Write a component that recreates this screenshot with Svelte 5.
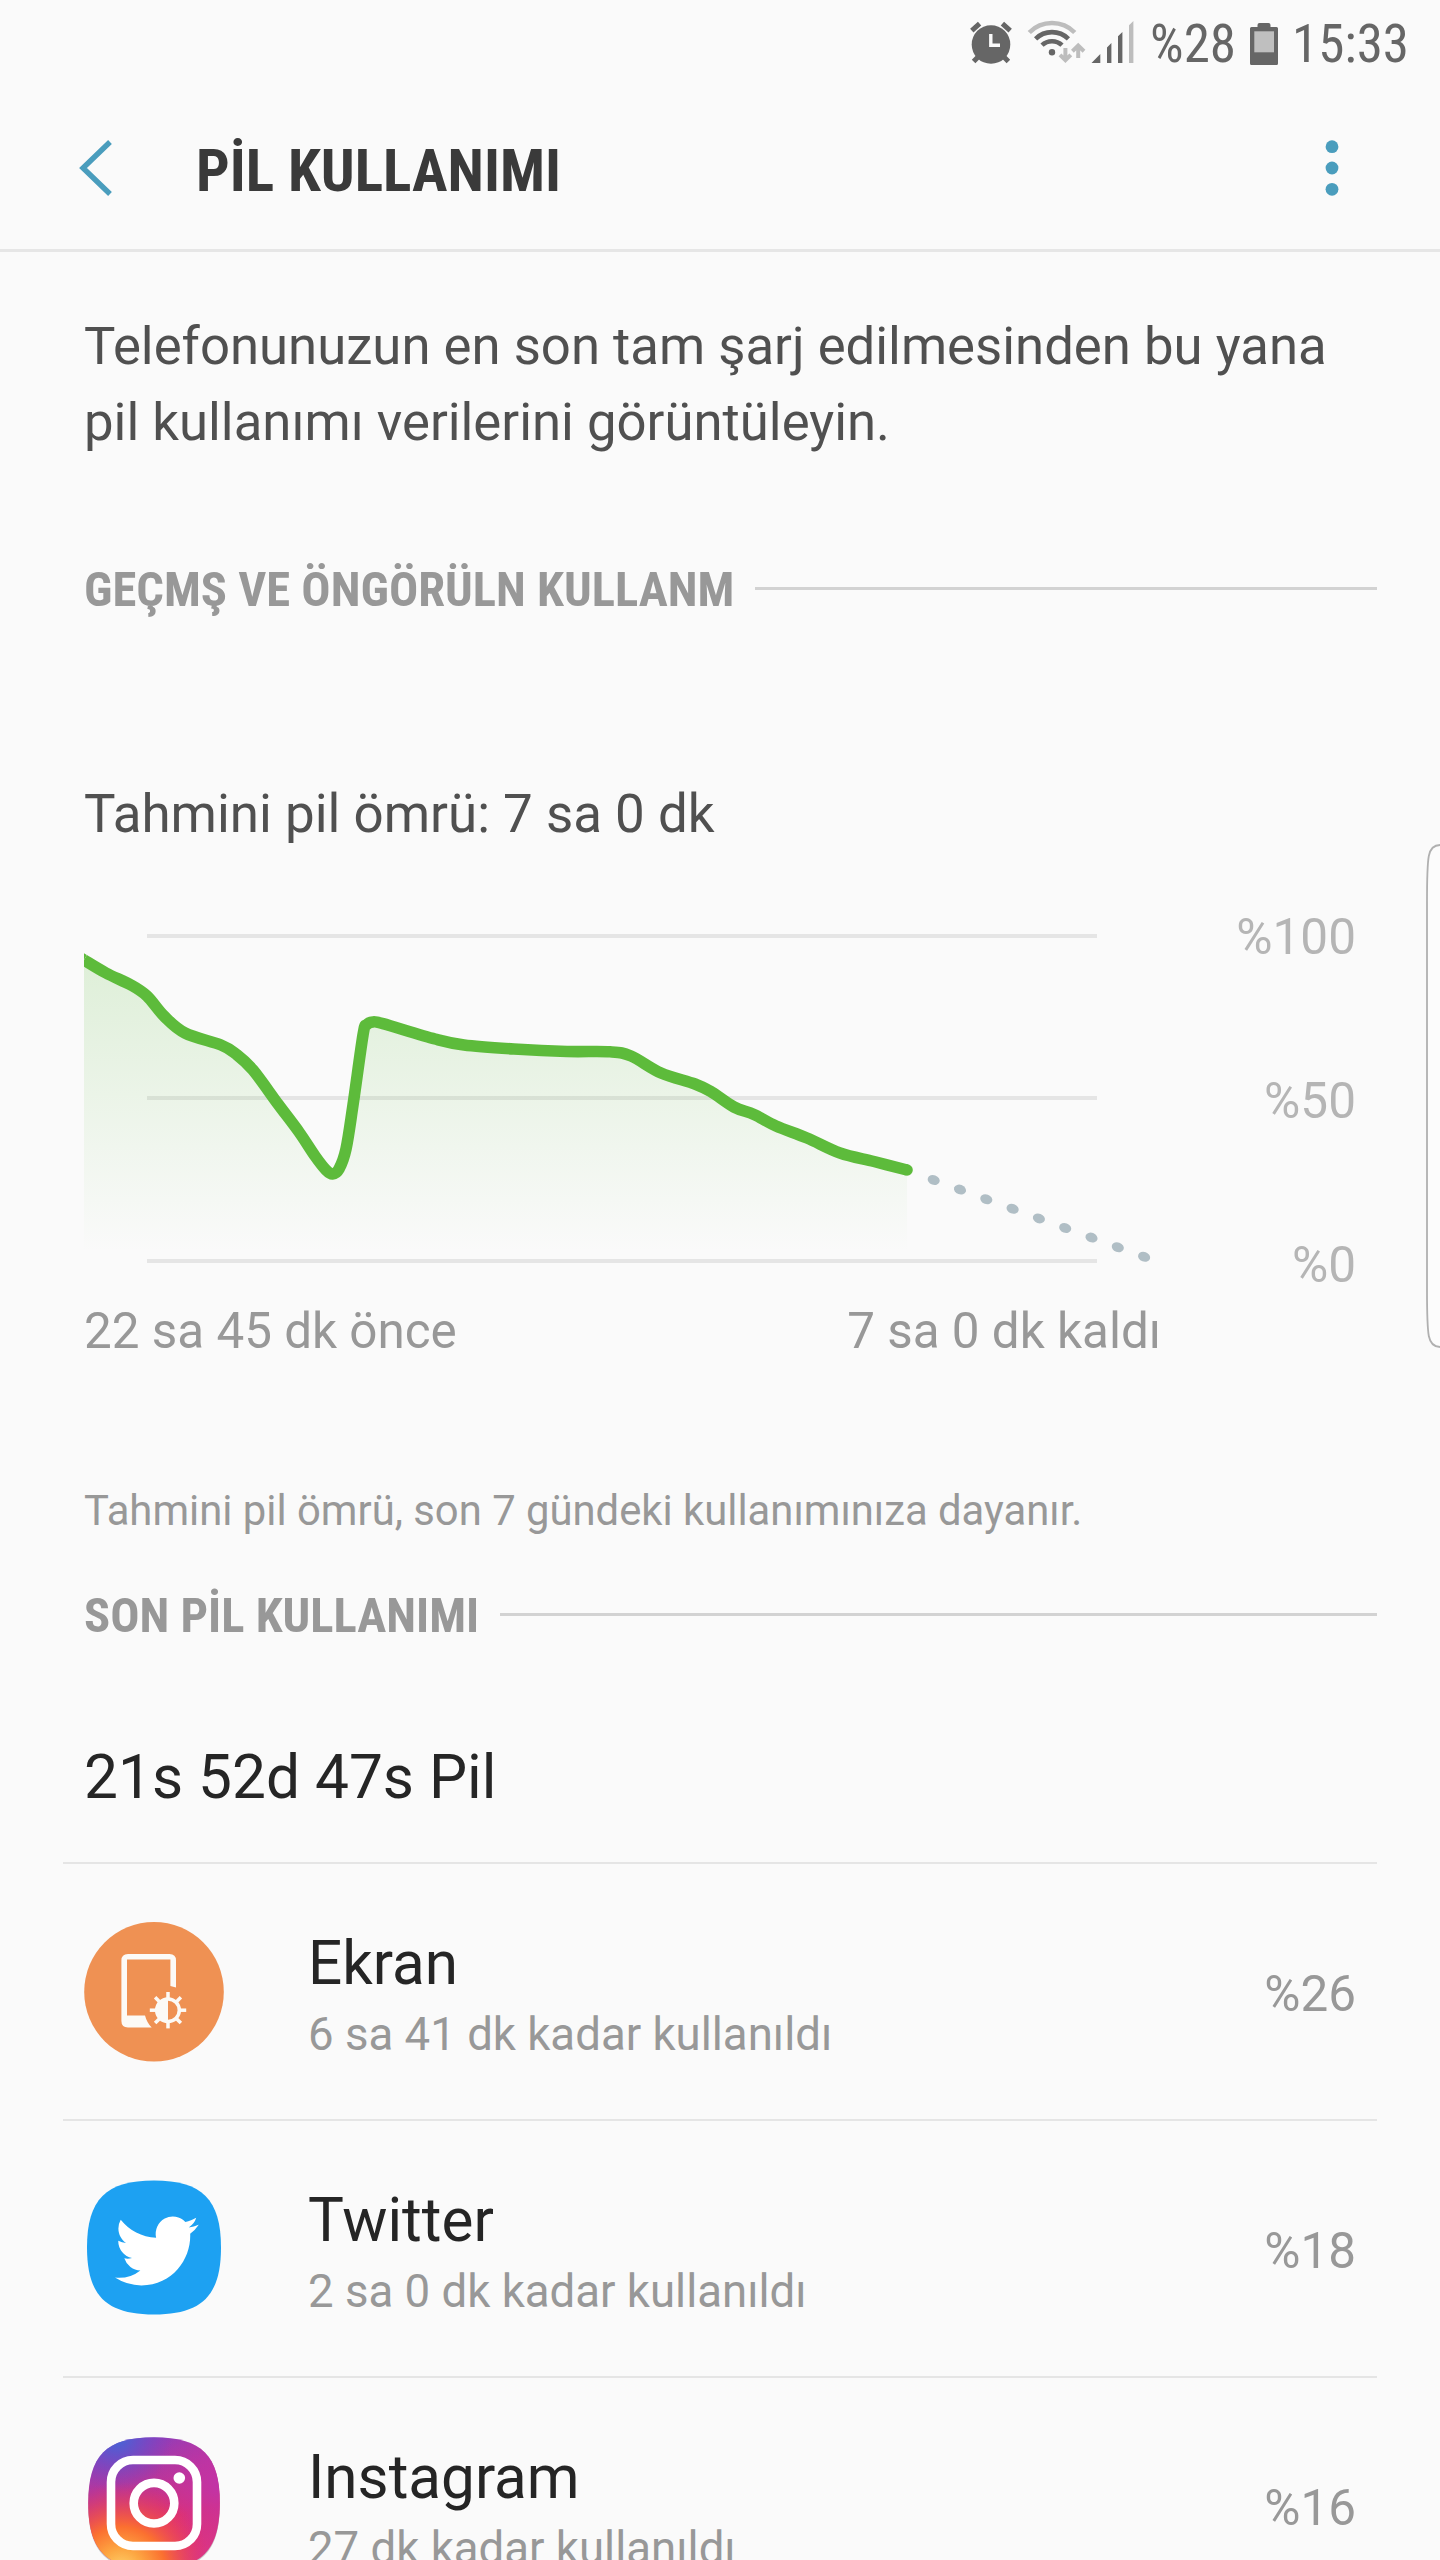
<script>
    const levels = ['%100', '%50', '%0'];

    // battery level over time, in chart pixels
    const history = [
        [0, 26], [22, 39], [47, 51], [63, 62], [80, 82], [101, 99], [137, 111], [152, 120],
        [169, 136], [194, 170], [215, 198], [231, 222], [242, 236], [248.5, 240], [255, 235],
        [262, 215], [269, 171], [279, 101], [282.5, 91], [289, 88], [299, 89.7], [351, 105], [380, 111],
        [430, 115], [483, 117.5], [526, 117.8], [547, 122], [577, 139], [611, 150], [627.5, 158],
        [650, 173], [670, 180.5], [692, 192], [723, 204], [756, 219], [790, 227.5], [823, 236]
    ];

    const forecast = Array.from({ length: 9 }, (_, i) => [849.7 + i * 26.3, 246 + i * 9.6]);

    const apps = [
        { icon: 'screen', name: 'Ekran', used: '6 sa 41 dk kadar kullanıldı', percent: '%26' },
        { icon: 'twitter', name: 'Twitter', used: '2 sa 0 dk kadar kullanıldı', percent: '%18' },
        { icon: 'instagram', name: 'Instagram', used: '27 dk kadar kullanıldı', percent: '%16' }
    ];

    function smooth(points) {
        let d = `M${points[0][0]} ${points[0][1]}`;
        for (let i = 0; i < points.length - 1; i++) {
            const a = points[i - 1] || points[i];
            const b = points[i];
            const c = points[i + 1];
            const e = points[i + 2] || c;
            d += ` C${b[0] + (c[0] - a[0]) / 6} ${b[1] + (c[1] - a[1]) / 6}`;
            d += ` ${c[0] - (e[0] - b[0]) / 6} ${c[1] - (e[1] - b[1]) / 6} ${c[0]} ${c[1]}`;
        }
        return d;
    }

    const line = smooth(history);
    const area = line + ' V318 H0 Z';
    const rays = [0, 45, 90, 135, 180, 225, 270, 315];
</script>


<style>
	:global(body) {
		margin: 0;
		background: #fafafa;
	}

	.screen {
		position: relative;
		width: 1440px;
		height: 2560px;
		overflow: hidden;
		background: #fafafa;
		font-family: Roboto, sans-serif;
		color: #252525;
	}

	p, h1, h2, ul {
		margin: 0;
		padding: 0;
		font-weight: normal;
	}

	svg {
		display: block;
		flex: none;
	}

	.status {
		display: flex;
		align-items: center;
		justify-content: flex-end;
		height: 87px;
		padding-right: 31px;
		font-family: 'Roboto Condensed', Roboto, sans-serif;
		font-stretch: 75%;
		font-size: 53px;
		line-height: 60px;
		color: #666;
	}
	.status__icons {
		margin-right: 15px;
	}
	.status__battery {
		margin: 0 14px;
	}

	.toolbar {
		display: flex;
		align-items: center;
		height: 162px;
		padding: 0 98px 0 79px;
		border-bottom: 3px solid #e6e6e6;
	}
	.toolbar__title {
		flex: 1;
		padding: 5px 0 0 83px;
		font-family: 'Roboto Condensed', Roboto, sans-serif;
		font-stretch: 75%;
		font-size: 59.4px;
		font-weight: 700;
		line-height: 72px;
		color: #3a3a3a;
	}

	.content {
		padding: 56px 63px 0 84px;
	}
	.intro {
		font-size: 52.7px;
		line-height: 76px;
		color: #505050;
	}

	.section {
		display: flex;
		align-items: center;
		gap: 21px;
		margin-top: 100px;
	}
	.section--usage {
		margin-top: 45px;
	}
	.section__title {
		font-family: 'Roboto Condensed', Roboto, sans-serif;
		font-stretch: 75%;
		font-size: 48.6px;
		font-weight: 700;
		line-height: 60px;
		color: #989898;
	}
	.section__rule {
		flex: 1;
		height: 3px;
		margin-bottom: 3px;
		background: #d2d2d2;
	}

	.estimate {
		margin-top: 164px;
		font-size: 52.9px;
		line-height: 60px;
		color: #505050;
	}

	.chart {
		display: flex;
		justify-content: space-between;
		height: 388px;
		margin-top: 63px;
		padding-right: 21px;
	}
	.chart__plot {
		margin-top: 27px;
	}
	.chart__levels {
		display: flex;
		flex-direction: column;
		justify-content: space-between;
		font-size: 49.5px;
		line-height: 60px;
		text-align: right;
		color: #b5b5b5;
	}
	.chart__range {
		display: flex;
		justify-content: space-between;
		width: 1077px;
		margin-top: 6px;
		font-size: 49.4px;
		line-height: 60px;
		color: #989898;
	}

	.note {
		margin-top: 120px;
		font-size: 41.8px;
		line-height: 60px;
		color: #989898;
	}
	.total {
		margin-top: 92px;
		font-size: 60.4px;
		line-height: 80px;
	}

	.apps {
		margin: 44px 0 0 -21px;
		list-style: none;
	}
	.app {
		display: flex;
		align-items: center;
		height: 255px;
		padding: 0 21px;
		border-top: 2px solid #e5e5e5;
	}
	.app__text {
		flex: 1;
		padding: 7px 0 0 84px;
	}
	.app__name {
		font-size: 60.2px;
		line-height: 72px;
	}
	.app__used {
		margin-top: 7px;
		font-size: 45.6px;
		line-height: 56px;
		color: #989898;
	}
	.app__percent {
		padding-top: 5px;
		font-size: 49.4px;
		line-height: 60px;
		color: #989898;
	}

	.edge {
		position: absolute;
		top: 842px;
		right: 0;
	}
</style>


<div class="screen">
	<div class="status">
		<svg class="status__icons" width="165" height="48" viewBox="0 0 165 48">
			<g fill="#666" stroke="#666">
				<circle cx="21" cy="24.5" r="19.3" stroke="none" />
				<path d="M1.8 10.6 L9.6 3.6 M32.4 3.6 L40.2 10.6" stroke-width="5" />
				<path d="M9 36 L3.6 41.6 M33 36 L38.4 41.6" stroke-width="5" />
			</g>
			<path d="M20.8 14 V25.3 H30" fill="none" stroke="#fafafa" stroke-width="3.4" />
			<g fill="none" stroke-width="4.6">
				<path d="M59.3 12.5 A32 32 0 0 1 104.7 12.5" stroke="#bdbdbd" />
				<path d="M65.6 18.8 A23.5 23.5 0 0 1 98.4 18.8" stroke="#666" />
				<path d="M72 25.2 A14.5 14.5 0 0 1 92 25.2" stroke="#666" />
				<path d="M95.4 28 V40 M90 34.8 L95.4 40.2 L100.8 34.8" stroke="#bdbdbd" stroke-width="4" />
				<path d="M108.2 38 V27 M102.4 31.2 L108.2 25.6 L114 31.2" stroke="#bdbdbd" stroke-width="4" />
			</g>
			<circle cx="82" cy="32.3" r="3.2" fill="#666" />
			<path d="M121.5 43 L130.3 34 V43 Z M137 43 V27.5 L141.4 23 V43 Z M148 43 V16.3 L152.4 12 V43 Z" fill="#666" />
			<path d="M159 43 V5.3 L163.4 1 V43 Z" fill="#bdbdbd" />
		</svg>
		<span>%28</span>
		<svg class="status__battery" width="28" height="44" viewBox="0 0 28 44">
			<path d="M7.5 5 V3 Q7.5 1 9.5 1 H18.5 Q20.5 1 20.5 3 V5 H26.5 Q28 5 28 6.5 V41.5 Q28 43 26.5 43 H1.5 Q0 43 0 41.5 V6.5 Q0 5 1.5 5 Z" fill="#666" />
			<rect x="4.3" y="9.3" width="19.7" height="21" fill="#bfbfbf" />
		</svg>
		<span>15:33</span>
	</div>

	<div class="toolbar">
		<svg width="34" height="58" viewBox="0 0 34 58">
			<path d="M31 3 L4 29 L31 55" fill="none" stroke="#4a9dbd" stroke-width="5.4" />
		</svg>
		<h1 class="toolbar__title">PİL KULLANIMI</h1>
		<svg width="20" height="58" viewBox="0 0 20 58" fill="#4a9dbd">
			<circle cx="10" cy="7.7" r="6.4" />
			<circle cx="10" cy="29" r="6.4" />
			<circle cx="10" cy="50.3" r="6.4" />
		</svg>
	</div>

	<div class="content">
		<p class="intro">Telefonunuzun en son tam şarj edilmesinden bu yana<br />pil kullanımı verilerini görüntüleyin.</p>

		<div class="section">
			<h2 class="section__title">GEÇMŞ VE ÖNGÖRÜLN KULLANM</h2>
			<div class="section__rule"></div>
		</div>

		<p class="estimate">Tahmini pil ömrü: 7 sa 0 dk</p>
		<div class="chart">
			<svg class="chart__plot" width="1080" height="334" viewBox="0 0 1080 334">
				<defs>
					<linearGradient id="fade" gradientUnits="userSpaceOnUse" x1="0" y1="20" x2="0" y2="318">
						<stop offset="0" stop-color="#5dbb3b" stop-opacity="0.18" />
						<stop offset="1" stop-color="#5dbb3b" stop-opacity="0" />
					</linearGradient>
				</defs>
				<path d="M63 2 H1013 M63 164 H1013 M63 327 H1013" stroke="#e5e5e5" stroke-width="4" />
				<path d={area} fill="url(#fade)" />
				<path d="M-8 21.5 L0 26" stroke="#5dbb3b" stroke-width="11.6" />
				<path d={line} fill="none" stroke="#5dbb3b" stroke-width="11.6" stroke-linejoin="round" />
				<circle cx="823" cy="236" r="5.8" fill="#5dbb3b" />
				{#each forecast as [x, y]}
					<ellipse cx={x} cy={y} rx="6.2" ry="4.8" transform="rotate(20 {x} {y})" fill="#b0bec5" />
				{/each}
			</svg>
			<div class="chart__levels">
				{#each levels as level}
					<span>{level}</span>
				{/each}
			</div>
		</div>
		<div class="chart__range">
			<span>22 sa 45 dk önce</span>
			<span>7 sa 0 dk kaldı</span>
		</div>
		<p class="note">Tahmini pil ömrü, son 7 gündeki kullanımınıza dayanır.</p>

		<div class="section section--usage">
			<h2 class="section__title">SON PİL KULLANIMI</h2>
			<div class="section__rule"></div>
		</div>

		<p class="total">21s 52d 47s Pil</p>
		<ul class="apps">
			{#each apps as app}
				<li class="app">
					<svg width="140" height="140" viewBox="0 0 140 140">
						{#if app.icon === 'screen'}
							<circle cx="70" cy="69.8" r="69.8" fill="#ef9153" />
							<path fill="#fcfaf6" d="M92 65.5 L86.4 64 V37.5 H43 V93.5 H61 Q63 101 67.7 105.5 H44 Q37.4 105.5 37.4 99 V38.5 Q37.4 32 44 32 H85.5 Q92 32 92 38.5 Z" />
							<g stroke="#fcfaf6" stroke-width="3.5">
								{#each rays as angle}
									<path d="M84 76.5 V70" transform="rotate({angle} 84 88.2)" />
								{/each}
								<circle cx="84" cy="88.2" r="11.3" fill="none" />
							</g>
							<path d="M84 76 A12 12 0 0 0 84 100.4 Z" fill="#fcfaf6" />
						{:else if app.icon === 'twitter'}
							<path d="M70 1.5 C118 1.5 137 20.5 137 68.5 S118 135.5 70 135.5 3 116.5 3 68.5 22 1.5 70 1.5Z" fill="#1da1f2" />
							<path transform="translate(31 29.6) scale(3.49 3.53)" fill="#fff" d="M23.953 4.57a10 10 0 01-2.825.775 4.958 4.958 0 002.163-2.723c-.951.555-2.005.959-3.127 1.184a4.92 4.92 0 00-8.384 4.482C7.69 8.095 4.067 6.13 1.64 3.162a4.822 4.822 0 00-.666 2.475c0 1.71.87 3.213 2.188 4.096a4.904 4.904 0 01-2.228-.616v.06a4.923 4.923 0 003.946 4.827 4.996 4.996 0 01-2.212.085 4.936 4.936 0 004.604 3.417 9.867 9.867 0 01-6.102 2.105c-.39 0-.779-.023-1.17-.067a13.995 13.995 0 007.557 2.209c9.053 0 13.998-7.496 13.998-13.985 0-.21 0-.42-.015-.63A9.935 9.935 0 0024 4.59z" />
						{:else}
							<defs>
								<linearGradient id="insta" x1="0.3" y1="0" x2="0.6" y2="1">
									<stop offset="0" stop-color="#8a3ec0" />
									<stop offset="0.35" stop-color="#b8369a" />
									<stop offset="0.65" stop-color="#e0306f" />
									<stop offset="1" stop-color="#d8358a" />
								</linearGradient>
								<radialGradient id="insta-right" cx="1" cy="0.35" r="0.5">
									<stop offset="0" stop-color="#c133a8" />
									<stop offset="1" stop-color="#c133a8" stop-opacity="0" />
								</radialGradient>
								<radialGradient id="insta-blue" cx="0.22" cy="0" r="0.42">
									<stop offset="0" stop-color="#4168d8" />
									<stop offset="1" stop-color="#6a45c8" stop-opacity="0" />
								</radialGradient>
								<radialGradient id="insta-warm" cx="0.25" cy="1.02" r="0.68">
									<stop offset="0" stop-color="#ffd870" />
									<stop offset="0.25" stop-color="#fda742" />
									<stop offset="0.5" stop-color="#fb7030" />
									<stop offset="1" stop-color="#e8305c" stop-opacity="0" />
								</radialGradient>
								<path id="insta-tile" d="M70 1.2 C118 1.2 135.8 20 135.8 67 S118 133 70 133 4.2 114 4.2 67 22 1.2 70 1.2Z" />
							</defs>
							<use href="#insta-tile" y="1.5" fill="#000" opacity="0.2" />
							<use href="#insta-tile" fill="url(#insta)" />
							<use href="#insta-tile" fill="url(#insta-right)" />
							<use href="#insta-tile" fill="url(#insta-blue)" />
							<use href="#insta-tile" fill="url(#insta-warm)" />
							<g fill="none" stroke="#fff" stroke-width="8.6">
								<rect x="27" y="24" width="86" height="86" rx="22" />
								<circle cx="70" cy="67.2" r="20.3" />
							</g>
							<circle cx="95.3" cy="42" r="5.8" fill="#fff" />
						{/if}
					</svg>
					<div class="app__text">
						<p class="app__name">{app.name}</p>
						<p class="app__used">{app.used}</p>
					</div>
					<span class="app__percent">{app.percent}</span>
				</li>
			{/each}
		</ul>
	</div>

	<!-- edge panel handle -->
	<svg class="edge" width="15" height="508" viewBox="0 0 15 508">
		<path d="M15 3 Q6 3 3.8 14 Q2 24 2 60 V448 Q2 484 3.8 494 Q6 505 15 505" fill="#fcfcfc" stroke="#b0b0b0" stroke-width="1.8" />
	</svg>
</div>
